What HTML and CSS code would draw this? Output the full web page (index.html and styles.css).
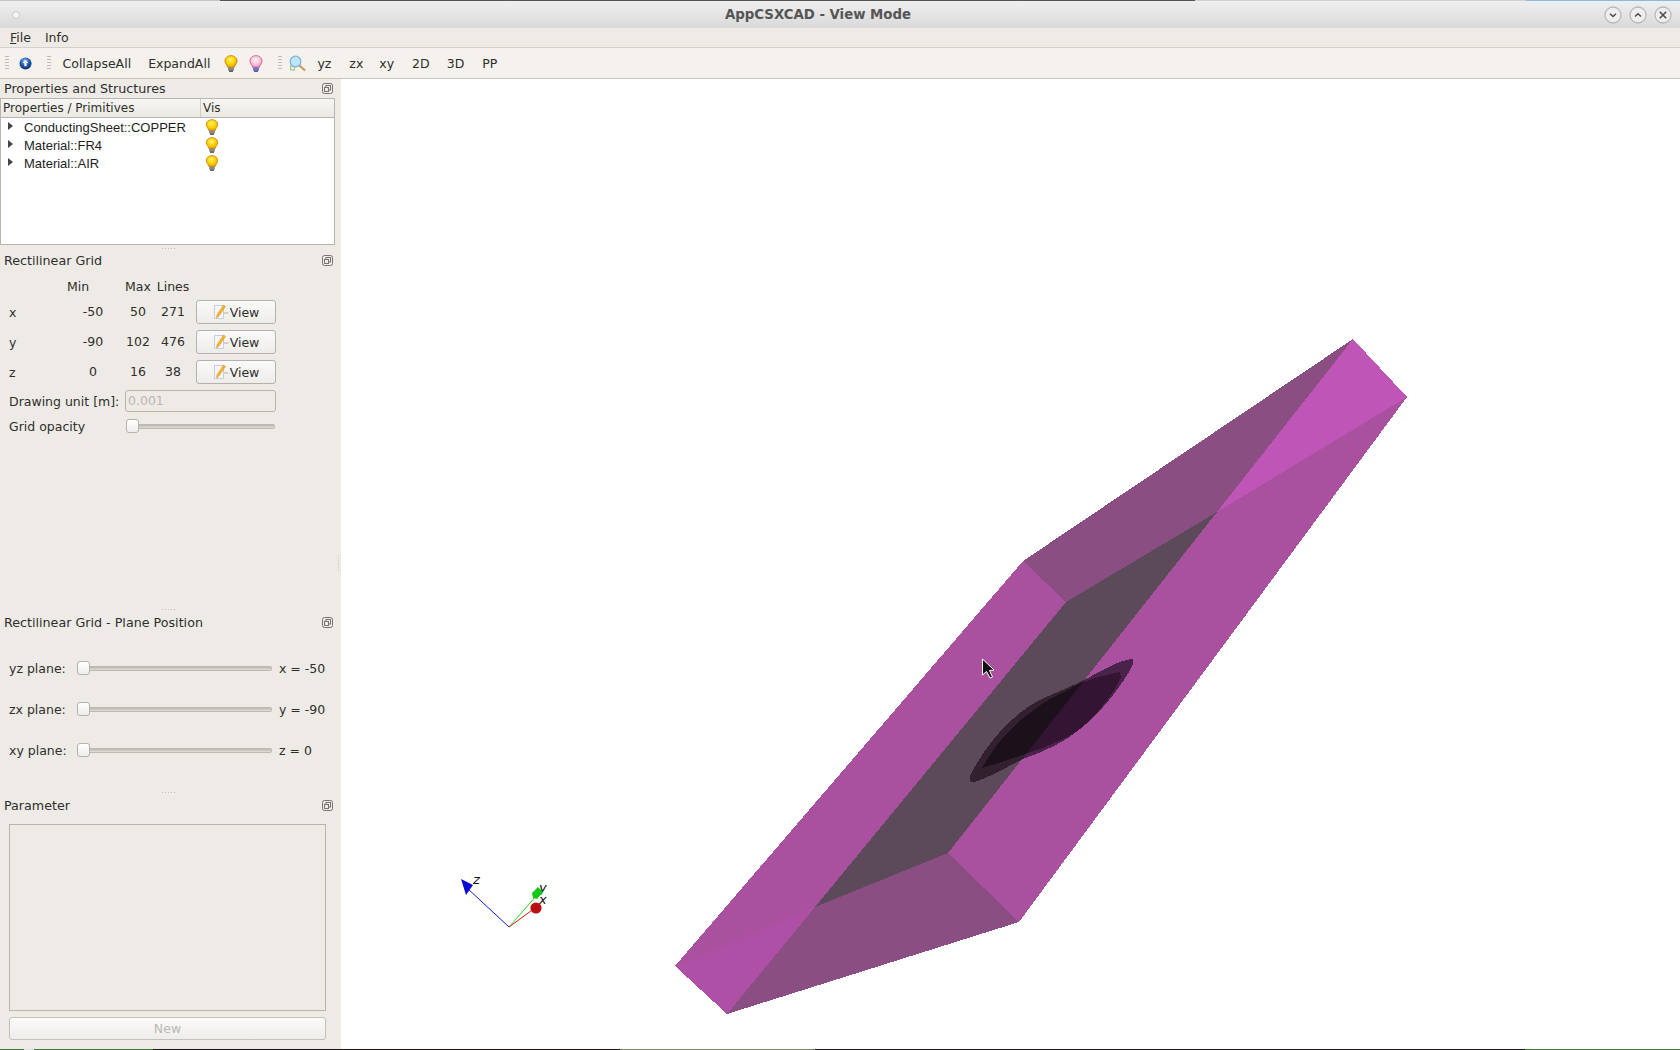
FILE: index.html
```html
<!DOCTYPE html>
<html lang="en">
<head>
<meta charset="utf-8">
<title>AppCSXCAD - View Mode</title>
<link rel="stylesheet" href="styles.css">
</head>
<body>
<svg class="defs" width="0" height="0" aria-hidden="true">
  <defs>
    <radialGradient id="gy" cx="45%" cy="35%" r="65%"><stop offset="0" stop-color="#fff27a"/><stop offset=".55" stop-color="#ffd400"/><stop offset="1" stop-color="#f0a000"/></radialGradient>
    <radialGradient id="gp" cx="45%" cy="35%" r="65%"><stop offset="0" stop-color="#fff0f6"/><stop offset=".6" stop-color="#fbc4d8"/><stop offset="1" stop-color="#f09ab8"/></radialGradient>
    <radialGradient id="gb" cx="45%" cy="30%" r="70%"><stop offset="0" stop-color="#8fbcec"/><stop offset=".5" stop-color="#2560b4"/><stop offset="1" stop-color="#0c2a70"/></radialGradient>
    <symbol id="bulb-y" viewBox="0 0 14 17">
      <path d="M7 .7C3.500.7 1 3 1 5.900c0 2.500 2 3.600 2.600 6.300h6.800C11 9.500 13 8.400 13 5.900 13 3 10.500.7 7 .7z" fill="url(#gy)" stroke="#d08a10"/>
      <rect x="4" y="12.200" width="6" height="3.300" fill="#8a8a80"/><rect x="5" y="15.300" width="4" height="1.500" fill="#444"/>
    </symbol>
    <symbol id="bulb-p" viewBox="0 0 14 17">
      <path d="M7 .7C3.500.7 1 3 1 5.900c0 2.500 2 3.600 2.600 6.300h6.800C11 9.500 13 8.400 13 5.900 13 3 10.500.7 7 .7z" fill="url(#gp)" stroke="#d8628a"/>
      <rect x="4" y="12.200" width="6" height="3.300" fill="#7a70d8"/><rect x="5" y="15.300" width="4" height="1.500" fill="#40408a"/>
    </symbol>
    <symbol id="float" viewBox="0 0 11 11">
      <rect x=".5" y=".5" width="10" height="10" rx="2" fill="none" stroke="#77746f"/>
      <rect x="4" y="2.500" width="4.500" height="4.500" fill="none" stroke="#77746f"/>
      <rect x="2.500" y="4.500" width="4" height="4" fill="#eeebe6" stroke="#77746f"/>
    </symbol>
    <symbol id="pencil" viewBox="0 0 16 16">
      <path d="M1.500 1.500h9v13h-9z" fill="#f4f6fb" stroke="#c4cede"/>
      <path d="M10.500 1 12.500 2.500 6 12 3.500 14 4 10.800z" fill="#f5b52c" stroke="#d98d18" stroke-width=".5"/>
      <path d="M10.500 9h5" stroke="#c9c7c2" stroke-width="1.500"/>
    </symbol>
  </defs>
</svg>

<div class="topline">
  <span class="tl tl-a"></span><span class="tl tl-b"></span><span class="tl tl-c"></span><span class="tl tl-d"></span>
</div>
<header class="titlebar">
  <span class="win-dot"></span>
  <span class="win-title">AppCSXCAD - View Mode</span>
  <span class="win-btns">
    <svg class="win-btn" viewBox="0 0 18 18"><circle cx="9" cy="9" r="8" fill="#eeeeee" stroke="#b8b8b8" stroke-width="1.300"/><path d="M6 7.800 9 10.500 12 7.800" fill="none" stroke="#4a4a4a" stroke-width="1.500"/></svg>
    <svg class="win-btn" viewBox="0 0 18 18"><circle cx="9" cy="9" r="8" fill="#eeeeee" stroke="#b8b8b8" stroke-width="1.300"/><path d="M6 10.500 9 7.800 12 10.500" fill="none" stroke="#4a4a4a" stroke-width="1.500"/></svg>
    <svg class="win-btn" viewBox="0 0 18 18"><circle cx="9" cy="9" r="8" fill="#eeeeee" stroke="#b8b8b8" stroke-width="1.300"/><path d="M5.800 5.800 12.200 12.200M12.200 5.800 5.800 12.200" fill="none" stroke="#4a4a4a" stroke-width="1.600"/></svg>
  </span>
</header>
<nav class="menubar">
  <span class="menu-item"><u>F</u>ile</span>
  <span class="menu-item">Info</span>
</nav>
<div class="toolbar">
  <span class="tb-handle"></span>
  <svg class="tb-globe" viewBox="0 0 14 14"><circle cx="7" cy="7" r="6.500" fill="url(#gb)"/><path d="M7 3 10 6.500H8.200V10H5.800V6.500H4z" fill="#fff"/></svg>
  <span class="tb-handle tb-handle-2"></span>
  <span class="tb-text tb-first">CollapseAll</span>
  <span class="tb-text">ExpandAll</span>
  <svg class="tb-bulb"><use href="#bulb-y"/></svg>
  <svg class="tb-bulb"><use href="#bulb-p"/></svg>
  <span class="tb-handle tb-handle-3"></span>
  <svg class="tb-mag" viewBox="0 0 17 17"><rect x="1.500" y="11" width="4" height="4" fill="#e6f2dc" stroke="#9cc08a"/><circle cx="6.500" cy="6.500" r="5.300" fill="#bde6fa" stroke="#7fb4d6" stroke-width="1.300"/><path d="M10.500 10.500 16 15.500" stroke="#c89a5c" stroke-width="2.200"/></svg>
  <span class="tb-text tb-xy">yz</span>
  <span class="tb-text tb-zx">zx</span>
  <span class="tb-text">xy</span>
  <span class="tb-text tb-2d">2D</span>
  <span class="tb-text">3D</span>
  <span class="tb-text tb-pp">PP</span>
</div>

<main class="main">
  <aside class="sidebar">
    <section class="dock dock-props">
      <div class="dock-title"><span>Properties and Structures</span><svg class="float"><use href="#float"/></svg></div>
      <div class="tree">
        <div class="tree-head"><span class="th-a">Properties / Primitives</span><span class="th-b">Vis</span></div>
        <div class="tree-row"><span class="arrow"></span><span class="tree-name">ConductingSheet::COPPER</span><svg class="tree-bulb"><use href="#bulb-y"/></svg></div>
        <div class="tree-row"><span class="arrow"></span><span class="tree-name">Material::FR4</span><svg class="tree-bulb"><use href="#bulb-y"/></svg></div>
        <div class="tree-row"><span class="arrow"></span><span class="tree-name">Material::AIR</span><svg class="tree-bulb"><use href="#bulb-y"/></svg></div>
      </div>
    </section>
    <div class="sep sep-first"></div>
    <section class="dock dock-grid">
      <div class="dock-title"><span>Rectilinear Grid</span><svg class="float"><use href="#float"/></svg></div>
      <div class="grid-form">
        <span></span><span class="h-min">Min</span><span class="c">Max</span><span class="c">Lines</span><span></span>
        <span>x</span><span class="c v">-50</span><span class="c v">50</span><span class="c v">271</span><span class="btn-cell"><span class="btn"><svg class="pencil"><use href="#pencil"/></svg>View</span></span>
        <span>y</span><span class="c v">-90</span><span class="c v">102</span><span class="c v">476</span><span class="btn-cell"><span class="btn"><svg class="pencil"><use href="#pencil"/></svg>View</span></span>
        <span>z</span><span class="c v">0</span><span class="c v">16</span><span class="c v">38</span><span class="btn-cell"><span class="btn"><svg class="pencil"><use href="#pencil"/></svg>View</span></span>
        <span class="span-label">Drawing unit [m]:</span><span class="input">0.001</span>
        <span class="span-label">Grid opacity</span><span class="slider slider-op"><span class="knob"></span><span class="track"></span></span>
      </div>
    </section>
    <div class="sep"></div>
    <section class="dock dock-plane">
      <div class="dock-title"><span>Rectilinear Grid - Plane Position</span><svg class="float"><use href="#float"/></svg></div>
      <div class="plane-form">
        <div class="plane-row"><span class="plane-label">yz plane:</span><span class="slider"><span class="knob"></span><span class="track"></span></span><span class="plane-val">x = -50</span></div>
        <div class="plane-row"><span class="plane-label">zx plane:</span><span class="slider"><span class="knob"></span><span class="track"></span></span><span class="plane-val">y = -90</span></div>
        <div class="plane-row"><span class="plane-label">xy plane:</span><span class="slider"><span class="knob"></span><span class="track"></span></span><span class="plane-val">z = 0</span></div>
      </div>
    </section>
    <div class="sep"></div>
    <section class="dock dock-param">
      <div class="dock-title"><span>Parameter</span><svg class="float"><use href="#float"/></svg></div>
      <div class="param-box"></div>
      <div class="new-btn">New</div>
    </section>
  </aside>
  <div class="vsep"></div>
  <div class="viewport">
    <svg class="scene" viewBox="341 79 1339 970" preserveAspectRatio="none" shape-rendering="crispEdges">
      <defs>
        <clipPath id="gray-face"><polygon points="1066,602 1217,512 948,853 815,907"/></clipPath>
      </defs>
      <polygon points="1023,561 1353,339 1217,512 1066,602" fill="#8a4e83"/>
      <polygon points="1066,602 1217,512 948,853 815,907" fill="#5c4a5a"/>
      <polygon points="815,907 948,853 1019,922 727,1014" fill="#8a4e83"/>
      <polygon points="1023,561 1066,602 815,907 675,966" fill="#a9519f"/>
      <polygon points="675,966 815,907 727,1014" fill="#ad50a6"/>
      <polygon points="1217,512 1407,397 1019,922 948,853" fill="#a9519f"/>
      <polygon points="1353,339 1407,397 1217,512" fill="#bf55b7"/>
      <path d="M1133 659C1120 659 1100 672 1080 682C1060 692 1040 698 1028 707C1003 724 983 750 971 774C968 781 971 783 975 782C990 777 1005 768 1023 759C1045 751 1065 742 1080 729C1100 714 1125 682 1133 664Z" fill="#48244a"/>
      <path d="M1120 672C1108 674 1095 678 1083 682C1065 692 1045 700 1035 709C1010 726 993 748 982 768C1000 763 1025 754 1040 749C1060 741 1075 734 1085 725C1100 710 1115 692 1121 677Z" fill="#341433"/>
      <g clip-path="url(#gray-face)">
        <path d="M1133 659C1120 659 1100 672 1080 682C1060 692 1040 698 1028 707C1003 724 983 750 971 774C968 781 971 783 975 782C990 777 1005 768 1023 759C1045 751 1065 742 1080 729C1100 714 1125 682 1133 664Z" fill="#33202f"/>
        <path d="M1120 672C1108 674 1095 678 1083 682C1065 692 1045 700 1035 709C1010 726 993 748 982 768C1000 763 1025 754 1040 749C1060 741 1075 734 1085 725C1100 710 1115 692 1121 677Z" fill="#1c111b"/>
      </g>
      <path d="M982.500 659V675L986.500 671.500 990 678 992.500 677 989.500 670.500 994 670Z" fill="#111" stroke="#fff" stroke-width="1" shape-rendering="auto"/>
      <g shape-rendering="auto">
        <path d="M509 927 467 888" stroke="#1414d8" stroke-width="1"/>
        <path d="M509 927 537 895" stroke="#22e022" stroke-width="1"/>
        <path d="M509 927 535 908" stroke="#e01414" stroke-width="1"/>
        <polygon points="461,879 473,885 466,895" fill="#0a0ad0"/>
        <text class="axis" x="473" y="884">z</text>
        <text class="axis" x="539" y="892">y</text>
        <polygon points="538,887 543,892 537,899 533,898 532,893" fill="#12c812"/>
        <text class="axis" x="539" y="904">x</text>
        <circle cx="536" cy="908" r="5.600" fill="#b81010"/>
      </g>
    </svg>
  </div>
</main>
<footer class="taskbar">
  <span class="tk tk-1"></span><span class="tk tk-2"></span><span class="tk tk-3"></span><span class="tk tk-4"></span><span class="tk tk-5"></span><span class="tk tk-6"></span><span class="tk tk-7"></span>
</footer>
</body>
</html>
```

FILE: styles.css
```css
* { box-sizing: border-box; }
html, body { margin: 0; height: 100%; }
body {
  width: 1680px; height: 1050px; overflow: hidden;
  display: flex; flex-direction: column;
  font: 13px "DejaVu Sans", sans-serif;
  color: #2e2e2c; background: #eeebe6;
}
.defs { position: absolute; }

.topline { display: flex; height: 1px; flex: none; }
.tl { display: block; height: 1px; }
.tl-a { width: 220px; background: #c4c4c4; }
.tl-b { width: 975px; background: #555555; }
.tl-c { width: 331px; background: #d2d2d2; }
.tl-d { flex: 1; background: #8cb8dc; }

.titlebar {
  flex: none; height: 27px; display: flex; align-items: center;
  background: linear-gradient(#efefef, #d9d9d9);
}
.win-dot { width: 8px; height: 8px; border-radius: 50%; background: #f6f6f6; border: 1px solid #c8c8c8; margin-left: 12px; }
.win-title { flex: 1; text-align: center; font-weight: bold; font-size: 13.300px; color: #555555; padding-left: 12px; }
.win-btns { display: flex; gap: 7px; padding-right: 8px; }
.win-btn { width: 18px; height: 18px; display: block; }

.menubar { flex: none; height: 20px; display: flex; align-items: center; background: #eeebe6; border-bottom: 1px solid #d3cfc9; padding-left: 10px; gap: 14px; font-size: 12.500px; }

.toolbar { flex: none; height: 31px; display: flex; align-items: center; background: #f5f2ed; border-bottom: 1px solid #c6c2bc; padding-left: 5px; font-size: 12.500px; }
.tb-handle { width: 4px; height: 16px; background-image: radial-gradient(circle, #c0bcb6 0.7px, transparent 0.9px); background-size: 2px 3px; }
.tb-globe { width: 13px; height: 13px; margin-left: 10px; }
.tb-handle-2 { margin-left: 15px; }
.tb-text { padding: 0 8.500px; white-space: nowrap; }
.tb-first { margin-left: 3px; }
.tb-bulb { width: 14px; height: 17px; margin: 0 5.500px; }
.tb-handle-3 { margin-left: 9px; }
.tb-mag { width: 17px; height: 17px; margin-left: 7px; margin-right: 3px; }
.tb-xy { margin-left: 0; }
.tb-zx { margin-left: 1px; margin-right: -1px; }
.tb-2d { margin-left: 1px; }
.tb-pp { margin-left: 1px; }

.main { flex: 1; min-height: 0; display: flex; }
.sidebar { width: 337px; flex: none; display: flex; flex-direction: column; }
.vsep { width: 4px; flex: none; background-image: radial-gradient(circle, #bcb8b2 0.7px, transparent 0.9px); background-size: 3px 3px; background-repeat: repeat-y; background-position: 0 center; mask: linear-gradient(#0000 0, #0000 476px, #000 476px, #000 492px, #0000 492px); -webkit-mask: linear-gradient(#0000 0, #0000 476px, #000 476px, #000 492px, #0000 492px); }
.viewport { flex: 1; min-width: 0; background: #fff; }
.scene { display: block; width: 100%; height: 100%; }
.axis { font: italic 13px "DejaVu Sans", sans-serif; fill: #111; }

.dock { display: flex; flex-direction: column; }
.dock-title { height: 18px; flex: none; display: flex; align-items: center; justify-content: space-between; padding: 0 4px 0 4px; font-size: 12.700px; }
.float { width: 11px; height: 11px; }
.sep { height: 8px; flex: none; background: radial-gradient(circle, #c0bcb6 0.6px, transparent 0.8px) center / 3px 3px repeat-x; margin: 0 160px 0 160px; }
.sep-first { height: 6px; }

.dock-props { height: 166px; }
.tree { margin-top: 1px; height: 147px; width: 335px; background: #fff; border: 1px solid #b8b4ae; font: 13px "Liberation Sans", sans-serif; }
.tree-head { height: 19px; display: flex; background: linear-gradient(#f8f6f2, #ece9e4); border-bottom: 1px solid #b8b4ae; font: 12px "DejaVu Sans", sans-serif; line-height: 19px; }
.th-a { width: 200px; padding-left: 2px; border-right: 1px solid #cfcbc5; }
.th-b { padding-left: 2px; }
.tree-row { height: 18px; display: flex; align-items: center; padding-left: 7px; color: #1e1e1e; }
.arrow { width: 0; height: 0; border-left: 5px solid #444; border-top: 4px solid transparent; border-bottom: 4px solid transparent; margin-right: 11px; margin-top: -2px; }
.tree-name { width: 182px; white-space: nowrap; font-size: 13px; }
.tree-bulb { width: 14px; height: 16px; margin-left: -1px; }

.dock-grid { height: 354px; }
.grid-form {
  display: grid; padding: 10px 0 0 9px;
  grid-template-columns: 57px 54px 36px 34px 86px;
  grid-template-rows: 15px 24px 24px 24px 22px 16px;
  row-gap: 6px; align-items: center; font-size: 12.500px;
}
.c { text-align: center; }
.v { margin-bottom: 2px; }
.h-min { padding-left: 1px; }
.btn-cell { padding-left: 6px; }
.btn { height: 24px; display: flex; align-items: center; justify-content: center; gap: 1px; background: linear-gradient(#fafafa, #eeece8); border: 1px solid #b5b1ab; border-radius: 3px; }
.pencil { width: 16px; height: 16px; }
.span-label { grid-column: 1 / 3; white-space: nowrap; }
.input { grid-column: 3 / 6; height: 22px; margin-left: 5px; padding-left: 2px; line-height: 20px; background: #eeebe6; border: 1px solid #b8b4ae; border-radius: 3px; color: #b9b6b1; }
.slider { display: flex; align-items: center; height: 13px; }
.slider-op { grid-column: 3 / 6; margin-left: 6px; margin-right: 1px; }
.knob { width: 13px; height: 14px; flex: none; background: linear-gradient(#ffffff, #efedea); border: 1px solid #b5b1ab; border-radius: 3px; }
.track { flex: 1; height: 5px; background: linear-gradient(#b9b6b0, #e2dfda); border: 1px solid #bdb9b3; border-left: 0; border-radius: 0 2px 2px 0; }

.dock-plane { height: 175px; }
.plane-form { padding: 29px 0 0 9px; display: flex; flex-direction: column; gap: 25px; font-size: 12.500px; }
.plane-row { height: 16px; display: flex; align-items: center; }
.plane-label { width: 68px; flex: none; white-space: nowrap; }
.plane-row .slider { width: 195px; flex: none; }
.plane-val { margin-left: 7px; white-space: nowrap; }

.dock-param { flex: 1; padding-bottom: 8px; }
.param-box { flex: none; height: 187px; margin: 10px 11px 0 9px; border: 1px solid #b8b4ae; }
.new-btn { height: 23px; margin: 6px 11px 0 9px; text-align: center; line-height: 21px; background: linear-gradient(#fbfbfa, #efedea); border: 1px solid #c4c0ba; border-radius: 3px; color: #bab7b2; font-size: 12.500px; }

.taskbar { flex: none; height: 1px; display: flex; }
.tk { display: block; height: 1px; }
.tk-1 { width: 24px; background: #38832c; }
.tk-2 { width: 10px; background: #dddddd; }
.tk-3 { width: 119px; background: #38832c; }
.tk-4 { width: 467px; background: #1a1414; }
.tk-5 { width: 195px; background: #7b8a5e; }
.tk-6 { width: 710px; background: #1c1416; }
.tk-7 { flex: 1; background: #38832c; }
```
